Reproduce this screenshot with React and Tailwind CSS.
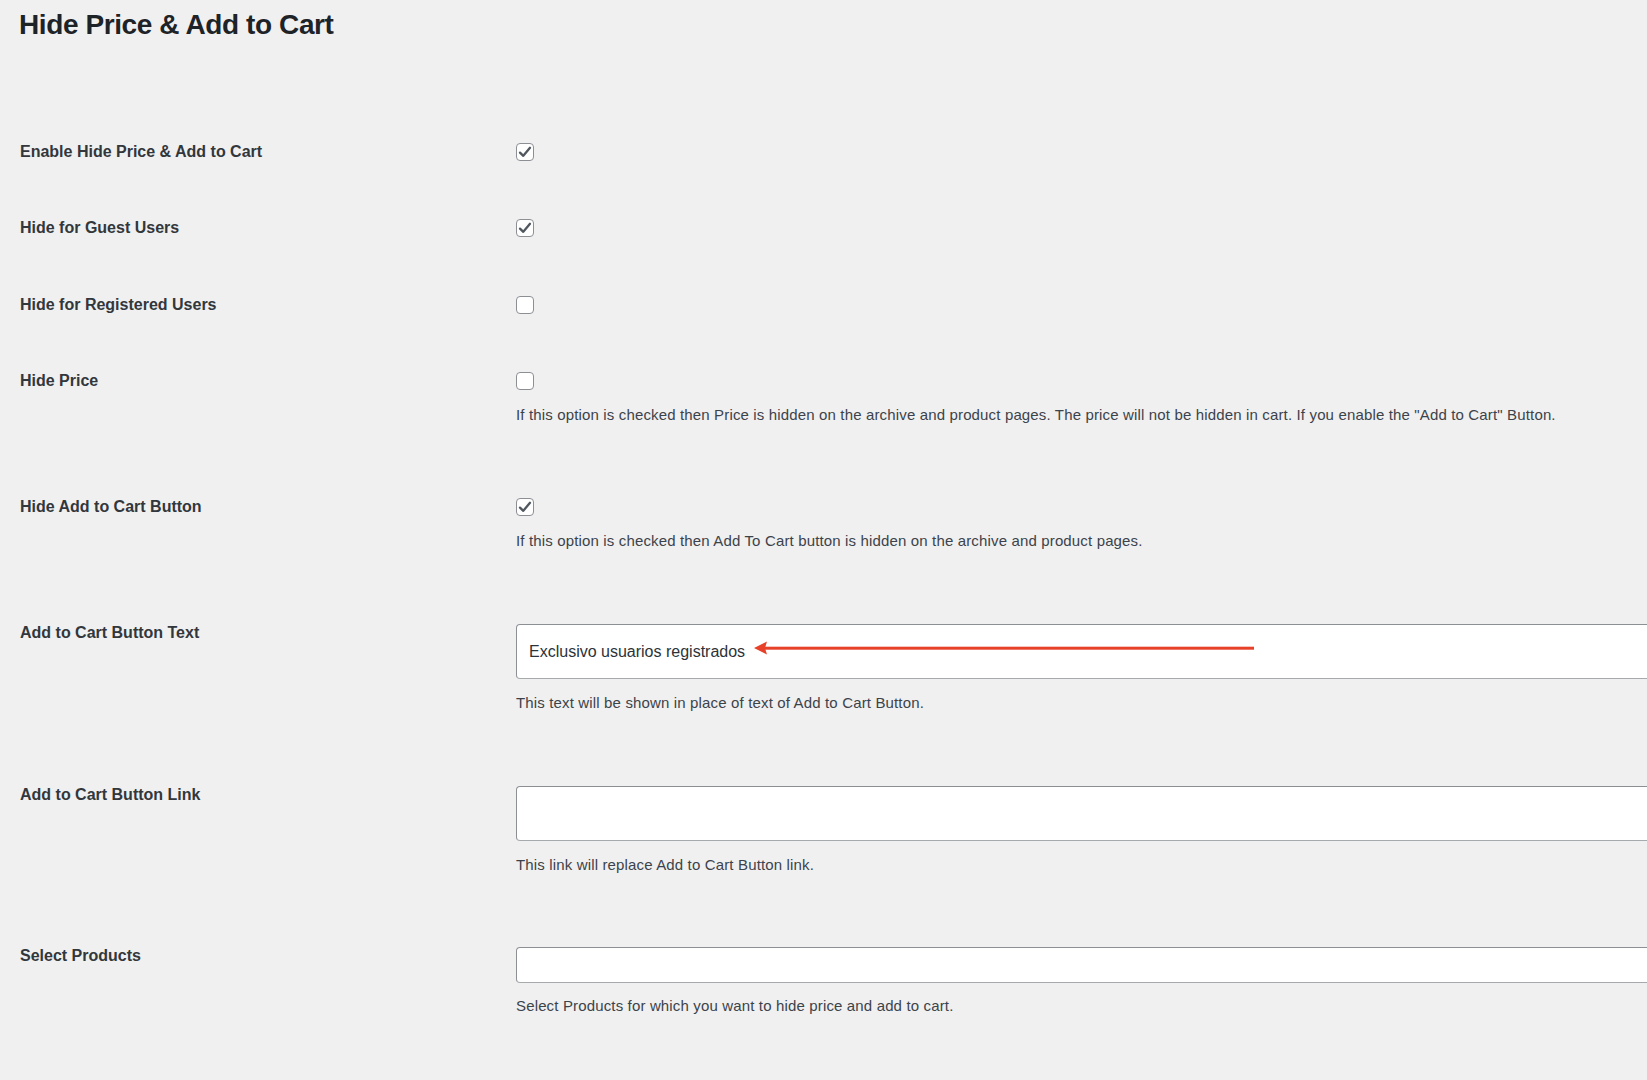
import React from "react";

const font = { fontFamily: '"Liberation Sans", Arial, sans-serif' };

function Checkbox({ checked }) {
    return (
        <div className="mt-[3px] w-[18px] h-[18px] rounded-[4px] border border-[#8c8f94] bg-white flex items-center justify-center">
            {checked && (
                <svg width="16" height="16" viewBox="0 0 16 16" fill="none">
                    <path d="M3 8.6 L6.3 11.8 L13 3.8" stroke="#50575e" strokeWidth="2.3" strokeLinecap="round" strokeLinejoin="round" />
                </svg>
            )}
        </div>
    );
}

function Description({ children, className }) {
    return (
        <p className={`text-[15px] leading-[20px] tracking-[0.15px] text-[#3c434a] whitespace-nowrap ${className}`}>
            {children}
        </p>
    );
}

function Row({ label, children, pb }) {
    return (
        <div className={`grid grid-cols-[497px_1fr] ${pb}`}>
            <div className="pl-[1px] text-[16px] leading-[24px] font-bold text-[#32373c]">{label}</div>
            <div className="min-w-0">{children}</div>
        </div>
    );
}

function TextInput({ value, height, children }) {
    return (
        <div
            className={`relative mt-[3px] w-[1200px] ${height} bg-white border border-[#8c8f94] border-b-[#a7aaad] rounded-l-[4px] flex items-center px-3 text-[16px] text-[#2c3338]`}
        >
            {value}
            {children}
        </div>
    );
}

export default function App() {
    return (
        <div className="min-h-screen w-full overflow-hidden bg-[#f0f0f1]" style={font}>
            <div className="pl-[19px] pt-[7px]">
                <h1 className="text-[28px] leading-[36px] font-bold tracking-[-0.4px] text-[#1d2327]">
                    Hide Price &amp; Add to Cart
                </h1>

                <div className="mt-[97px] flex flex-col">
                    <Row label="Enable Hide Price & Add to Cart" pb="pb-[52px]">
                        <Checkbox checked />
                    </Row>
                    <Row label="Hide for Guest Users" pb="pb-[53px]">
                        <Checkbox checked />
                    </Row>
                    <Row label="Hide for Registered Users" pb="pb-[52px]">
                        <Checkbox />
                    </Row>
                    <Row label="Hide Price" pb="pb-[70px]">
                        <Checkbox />
                        <Description className="mt-[15px]">
                            If this option is checked then Price is hidden on the archive and product pages. The price will not be hidden in cart. If you enable the "Add to Cart" Button.
                        </Description>
                    </Row>
                    <Row label="Hide Add to Cart Button" pb="pb-[70px]">
                        <Checkbox checked />
                        <Description className="mt-[15px]">
                            If this option is checked then Add To Cart button is hidden on the archive and product pages.
                        </Description>
                    </Row>
                    <Row label="Add to Cart Button Text" pb="pb-[70px]">
                        <TextInput value="Exclusivo usuarios registrados" height="h-[55px]">
                            <svg className="absolute left-[237px] top-[16px]" width="500" height="14" viewBox="0 0 500 14">
                                <polygon points="0,7 13,0.5 11,7 13,13.5" fill="#e8412a" />
                                <rect x="10" y="5.7" width="490" height="3" fill="#e8412a" />
                            </svg>
                        </TextInput>
                        <Description className="mt-[14px]">
                            This text will be shown in place of text of Add to Cart Button.
                        </Description>
                    </Row>
                    <Row label="Add to Cart Button Link" pb="pb-[69px]">
                        <TextInput value="" height="h-[55px]" />
                        <Description className="mt-[14px]">This link will replace Add to Cart Button link.</Description>
                    </Row>
                    <Row label="Select Products" pb="pb-[40px]">
                        <TextInput value="" height="h-[36px]" />
                        <Description className="mt-[13px]">
                            Select Products for which you want to hide price and add to cart.
                        </Description>
                    </Row>
                </div>
            </div>
        </div>
    );
}
